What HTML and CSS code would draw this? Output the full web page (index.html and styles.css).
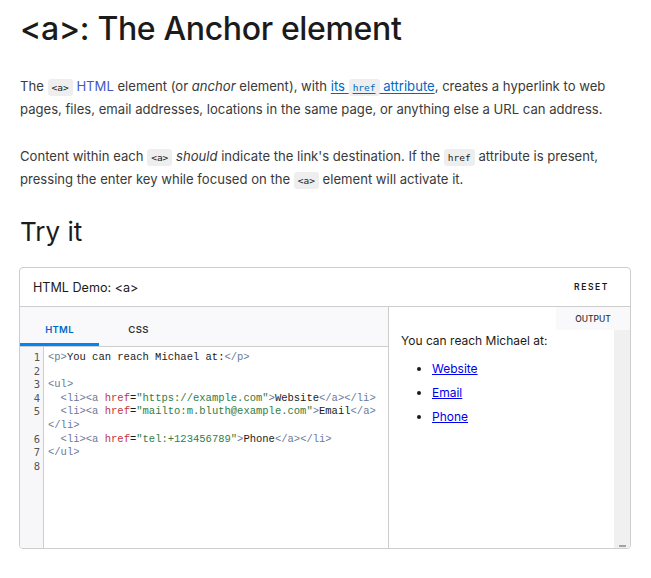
FILE: index.html
```html
<!DOCTYPE html>
<html>
<head>
<meta charset="utf-8">
<link rel="stylesheet" href="styles.css">
</head>
<body>
<main class="page">
  <h1 class="title">&lt;a&gt;: The Anchor element</h1>
  <p class="para">The <code class="ic">&lt;a&gt;</code> <a class="lnk" href="#">HTML</a> element (or <em>anchor</em> element), with <a class="lnk ul" href="#">its <code class="ic">href</code> attribute</a>, creates a hyperlink to web pages, files, email addresses, locations in the same page, or anything else a URL can address.</p>
  <p class="para">Content within each <code class="ic">&lt;a&gt;</code> <em>should</em> indicate the link's destination. If the <code class="ic">href</code> attribute is present, pressing the enter key while focused on the <code class="ic">&lt;a&gt;</code> element will activate it.</p>
  <h2 class="sub">Try it</h2>
  <section class="demo">
    <header class="demo-head">
      <span class="demo-title">HTML Demo: &lt;a&gt;</span>
      <span class="reset">RESET</span>
    </header>
    <div class="demo-body">
      <div class="editor">
        <div class="tabs">
          <span class="tab active">HTML</span>
          <span class="tab">CSS</span>
        </div>
        <div class="code">
          <div class="gutter">
            <div>1</div><div>2</div><div>3</div><div>4</div><div>5</div><div>&nbsp;</div><div>6</div><div>7</div><div>8</div>
          </div>
          <pre class="src"><span class="tg">&lt;p&gt;</span>You can reach Michael at:<span class="tg">&lt;/p&gt;</span>

<span class="tg">&lt;ul&gt;</span>
  <span class="tg">&lt;li&gt;&lt;a</span> <span class="at">href</span>=<span class="st">"https://example.com"</span><span class="tg">&gt;</span>Website<span class="tg">&lt;/a&gt;&lt;/li&gt;</span>
  <span class="tg">&lt;li&gt;&lt;a</span> <span class="at">href</span>=<span class="st">"mailto:m.bluth@example.com"</span><span class="tg">&gt;</span>Email<span class="tg">&lt;/a&gt;</span>
<span class="tg">&lt;/li&gt;</span>
  <span class="tg">&lt;li&gt;&lt;a</span> <span class="at">href</span>=<span class="st">"tel:+123456789"</span><span class="tg">&gt;</span>Phone<span class="tg">&lt;/a&gt;&lt;/li&gt;</span>
<span class="tg">&lt;/ul&gt;</span>
</pre>
        </div>
      </div>
      <div class="output">
        <span class="out-label">OUTPUT</span>
        <div class="out-content">
          <p class="out-p">You can reach Michael at:</p>
          <ul class="out-list">
            <li><a href="#">Website</a></li>
            <li><a href="#">Email</a></li>
            <li><a href="#">Phone</a></li>
          </ul>
        </div>
        <div class="scrollbar"><span class="arrow"></span></div>
      </div>
    </div>
  </section>
</main>
</body>
</html>
```

FILE: styles.css
```css
* { box-sizing: border-box; }
html, body { margin: 0; padding: 0; background: #fff; }
body { font-family: Inter, "Noto Sans", sans-serif; color: #1b1b1b; }

.page { padding: 0 20px 0 19px; }

.title {
  margin: 10px 0 0 1px;
  font-size: 32px;
  line-height: 38px;
  font-weight: 500;
  letter-spacing: -0.35px;
}

.para {
  margin: 28px 0 0 1px;
  font-size: 13.1px;
  line-height: 21.5px;
  color: #3a3a3a;
}
.para + .para { margin-top: 26px; }

.ic {
  font-family: "DejaVu Sans Mono", monospace;
  font-size: 9.5px;
  background: #eeeeee;
  border-radius: 3px;
  padding: 3px 4px;
  color: #1b1b1b;
}
.lnk { color: #4358c4; text-decoration: none; }
.lnk.ul { color: #0069c2; text-decoration: underline; text-underline-offset: 2px; }
.lnk.ul .ic { color: #0069c2; }

.sub {
  margin: 25px 0 0 1px;
  font-size: 26px;
  line-height: 32px;
  font-weight: 400;
}

.demo {
  margin-top: 19px;
  border: 1px solid #cdcdcd;
  border-radius: 4px;
  height: 282px;
  display: flex;
  flex-direction: column;
  overflow: hidden;
}
.demo-head {
  height: 39px;
  flex: none;
  display: flex;
  align-items: center;
  justify-content: space-between;
  padding: 0 21px 0 13px;
  border-bottom: 1px solid #cdcdcd;
}
.demo-title { font-size: 12.6px; color: #1b1b1b; }
.reset {
  font-size: 8.5px;
  font-weight: 600;
  letter-spacing: 1.6px;
  color: #1b1b1b;
}

.demo-body { flex: 1; display: flex; min-height: 0; }

.editor {
  width: 369px;
  flex: none;
  border-right: 1px solid #cdcdcd;
  display: flex;
  flex-direction: column;
}
.tabs {
  height: 40px;
  flex: none;
  display: flex;
  background: #f9f9fb;
  border-bottom: 1px solid #cdcdcd;
}
.tab {
  width: 79px;
  display: flex;
  align-items: center;
  justify-content: center;
  font-size: 9.5px;
  font-weight: 600;
  letter-spacing: 0.3px;
  color: #333;
  padding-top: 6px;
}
.tab.active {
  color: #0069c2;
  border-bottom: 3px solid #0085f2;
  padding-top: 9px;
}

.code { flex: 1; display: flex; }
.gutter {
  width: 24px;
  flex: none;
  background: #f7f7f9;
  border-right: 1px solid #cdcdcd;
  padding: 4px 3px 0 0;
  text-align: right;
  font-family: "DejaVu Sans Mono", monospace;
  font-size: 10.5px;
  line-height: 13.6px;
  color: #555;
}
.src {
  margin: 0;
  padding: 4px 0 0 4px;
  font-family: "Liberation Mono", monospace;
  font-size: 10.5px;
  line-height: 13.6px;
  color: #1b1b1b;
}
.tg { color: #6b7a99; }
.at { color: #c3343e; }
.st { color: #2f7d4a; }

.output { flex: 1; display: flex; position: relative; }
.out-content { flex: 1; padding: 0 12px; }
.out-p { margin: 26px 0 0; font-size: 12px; line-height: 16px; color: #1b1b1b; }
.out-list {
  margin: 8px 0 0;
  padding-left: 31px;
  font-size: 12px;
  line-height: 24px;
}
.out-list a { color: #0000ee; text-decoration: underline; }

.out-label {
  position: absolute;
  top: 0;
  right: 0;
  width: 74px;
  height: 23px;
  background: #f9f9fb;
  display: flex;
  align-items: center;
  justify-content: center;
  font-size: 8.5px;
  font-weight: 500;
  color: #333;
}
.scrollbar {
  width: 16px;
  flex: none;
  margin-top: 23px;
  background: #f0f0f0;
  display: flex;
  justify-content: center;
  align-items: flex-end;
}
.arrow {
  width: 7px;
  height: 2px;
  background: #a3a3a3;
  margin-bottom: 1px;
}
```
